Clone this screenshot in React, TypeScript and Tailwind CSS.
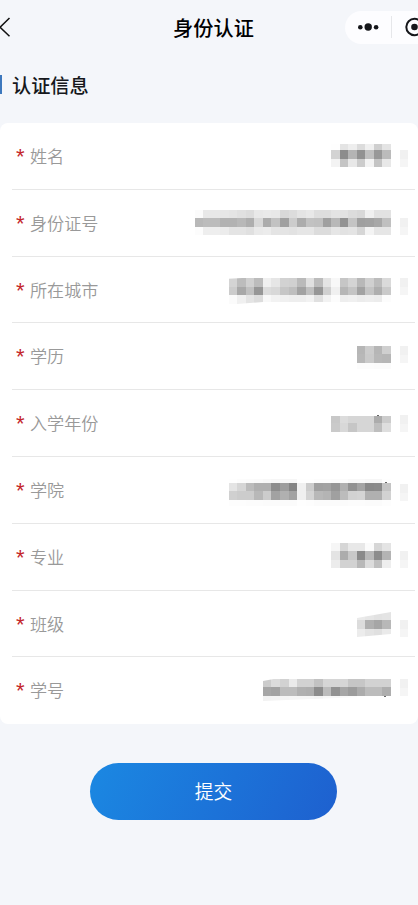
import React from 'react'

interface Band {
  y: number
  h: number
  cells: string
}

interface Field {
  label: string
  bands: Band[]
  tail: number
  clip?: string
  speck?: [number, number]
}

const CELL = 8.54
const VALUE_RIGHT = 204

// cells: grey levels (hex), right aligned to the end of the value
const fields: Field[] = [
  {
    label: '姓名',
    tail: 27,
    bands: [
      { y: 21, h: 6, cells: 'fe e4 ee dc f0 cf e4' },
      { y: 27, h: 9, cells: 'd3 8c b4 92 c0 98 bb' },
      { y: 36, h: 8, cells: 'f3 c4 e8 cc f3 c4 e8' },
    ],
  },
  {
    label: '身份证号',
    tail: 28,
    bands: [
      { y: 20, h: 8, cells: 'fb e8 e8 e6 e4 e0 dc e8 ea e8 d8 dc e4 e8 de de e4 e2 dc d8 f0 e2 e2' },
      { y: 28, h: 9, cells: 'b8 bc bc b2 b2 b8 ae d8 ac c2 a0 cc ac c2 c0 a0 b8 92 c4 a0 a2 a8 c0' },
      { y: 37, h: 8, cells: 'fc ee ee ec e4 e4 e0 ea ec e4 e4 e2 e6 e6 dc dc e6 e2 e4 d6 f4 e6 e6' },
    ],
  },
  {
    label: '所在城市',
    tail: 21,
    clip: '0,24 76,20 204,20 204,45 76,45 50,47 0,48',
    bands: [
      { y: 21, h: 9, cells: 'd4 bc d0 bc f0 e6 d2 d0 ba e0 bc e4 f8 c6 d4 b8 d0 bc da' },
      { y: 30, h: 8, cells: 'cc a8 c0 96 dc d8 c6 be a2 c0 96 d0 f0 b6 c4 a2 c4 ae ca' },
      { y: 38, h: 9, cells: 'fb f0 e4 dc f8 f2 f0 ee ee f2 e0 f2 fc ee f0 ec ee ec fc' },
    ],
  },
  {
    label: '学历',
    tail: 23,
    bands: [
      { y: 23, h: 8, cells: 'b6 cc b6 cf' },
      { y: 31, h: 9, cells: 'b8 ca b8 b6' },
      { y: 40, h: 6, cells: 'fc fc fb fb' },
    ],
  },
  {
    label: '入学年份',
    tail: 25,
    speck: [190, 25],
    bands: [
      { y: 26, h: 7, cells: 'c8 dc d6 d6 d6 ac cc' },
      { y: 33, h: 9, cells: 'ca d8 c6 d6 d6 be de' },
    ],
  },
  {
    label: '学院',
    tail: 27,
    speck: [198, 25],
    bands: [
      { y: 22, h: 4, cells: 'fe fc fb fa f8 f6 f6 f6 fe fe fc fc fb fb f8 f8 f6 f6 fe' },
      { y: 26, h: 8, cells: 'e4 d6 bc b0 b0 8c 9c 84 f0 cc a0 a2 96 b0 92 a4 88 8a c4' },
      { y: 34, h: 9, cells: 'd0 cc cc b8 cc a2 b0 a2 f0 d4 b8 b4 a0 bc d2 d4 b0 b0 d2' },
      { y: 43, h: 6, cells: 'fd fd fc fc fb fb fb fb fe fd fb fb fb fb fc fc fb fb fd' },
    ],
  },
  {
    label: '专业',
    tail: 27,
    bands: [
      { y: 19, h: 8, cells: 'f6 d6 e8 e8 fb d6 e4' },
      { y: 27, h: 9, cells: 'e4 ac c8 8a b8 8c b4' },
      { y: 36, h: 8, cells: 'ec d2 d2 b8 dc c0 ee' },
    ],
  },
  {
    label: '班级',
    tail: 29,
    clip: '170,27 204,21 204,43 170,46',
    bands: [
      { y: 20, h: 9, cells: 'ea e6 e2 e4' },
      { y: 29, h: 9, cells: 'dc b0 a6 b8' },
      { y: 38, h: 8, cells: 'ec e4 e0 ea' },
    ],
  },
  {
    label: '学号',
    tail: 22,
    clip: '76,24 92,21 204,21 204,39 150,41 76,44',
    speck: [197, 39],
    bands: [
      { y: 22, h: 8, cells: 'cc dc d2 ea d2 d2 c2 d6 d6 d6 c6 c6 d2 d2 d2' },
      { y: 30, h: 9, cells: 'a6 a2 bc bc b0 ae 8c bc 92 a6 9c ac bc bc ae' },
      { y: 39, h: 5, cells: 'f2 f3 f5 f6 f6 f6 f4 f8 f8 fa fc fe fe fe fe' },
    ],
  },
]

const MaskedValue: React.FC<{ field: Field; id: string }> = ({ field, id }) => (
  <svg width="221" height="64" viewBox="0 0 221 64" className="shrink-0" shapeRendering="crispEdges">
    {field.clip && (
      <clipPath id={id}>
        <polygon points={field.clip} />
      </clipPath>
    )}
    <g clipPath={field.clip ? `url(#${id})` : undefined}>
      {field.bands.map((band) => {
        const cells = band.cells.split(' ')
        return cells.map((c, i) => (
          <rect
            key={`${band.y}-${i}`}
            x={VALUE_RIGHT - (cells.length - i) * CELL}
            y={band.y}
            width={CELL}
            height={band.h}
            fill={`#${c}${c}${c}`}
          />
        ))
      })}
    </g>
    <rect x="212.5" y={field.tail} width="8.5" height="9" fill="#f1f1f1" />
    <rect x="212.5" y={field.tail + 9} width="8.5" height="8" fill="#f5f5f5" />
    {field.speck && <rect x={field.speck[0]} y={field.speck[1]} width="2" height="1" fill="#666" />}
  </svg>
)

export default function App() {
  return (
    <div className="h-[905px] w-[418px] overflow-hidden bg-[#f4f6fa] font-['Noto_Sans_CJK_SC',sans-serif]">
      <header className="grid h-[55px] grid-cols-[1fr_auto_1fr] items-center">
        <svg width="12" height="22" viewBox="0 0 12 22" fill="none" stroke="#111" strokeWidth="1.5">
          <path d="M9.5 1 L0.1 10.2 L9.5 19.3" />
        </svg>
        <h1 className="pl-[9px] text-[20.2px] leading-[54px] font-medium text-black">身份认证</h1>
        <div className="flex justify-end overflow-hidden">
          <div className="flex h-[33px] w-[73px] shrink-0 items-center rounded-l-full bg-[#fdfdff]">
            <svg width="73" height="33" viewBox="0 0 73 33" fill="#15161a">
              <circle cx="15.3" cy="16.3" r="2.3" />
              <circle cx="23.2" cy="16" r="3.7" />
              <circle cx="31.1" cy="16.3" r="2.3" />
              <path d="M46.5 5v22" stroke="#e6e7ea" strokeWidth="1" />
              <circle cx="69.5" cy="16" r="8.2" fill="none" stroke="#15161a" strokeWidth="2" />
              <circle cx="69.5" cy="16" r="3.3" />
            </svg>
          </div>
        </div>
      </header>

      <div className="flex h-[68px] items-start pt-5">
        <div className="h-[19px] w-[2px] bg-[#3d78bd]" />
        <h2 className="pl-[10px] text-[19.2px] leading-[20px] font-medium text-[#16181c]">认证信息</h2>
      </div>

      <main className="h-[601px] rounded-[8px] bg-white pr-[3px] pl-3">
        {fields.map((field, i) => (
          <div
            key={field.label}
            className="flex h-[66.8px] items-start justify-between border-b border-[#e7e7e7] pr-[7px] last:border-b-0"
          >
            <div className="flex h-[65px] items-center pl-1 text-[17.1px] leading-none">
              <span className="w-[14px] pt-[3px] font-['Liberation_Sans',sans-serif] text-[22px] text-[#c4262b]">*</span>
              <span className="font-[350] whitespace-nowrap text-[#999]">{field.label}</span>
            </div>
            <MaskedValue field={field} id={`mask-${i}`} />
          </div>
        ))}
      </main>

      <div className="flex justify-center pt-[39px] pl-[9px]">
        <button className="h-[57px] w-[247px] rounded-full bg-linear-[115deg,#1b86e1_5%,#1c72d8_55%,#1e60cf_100%] text-[18.8px] leading-none font-[350] text-white">
          提交
        </button>
      </div>
    </div>
  )
}
